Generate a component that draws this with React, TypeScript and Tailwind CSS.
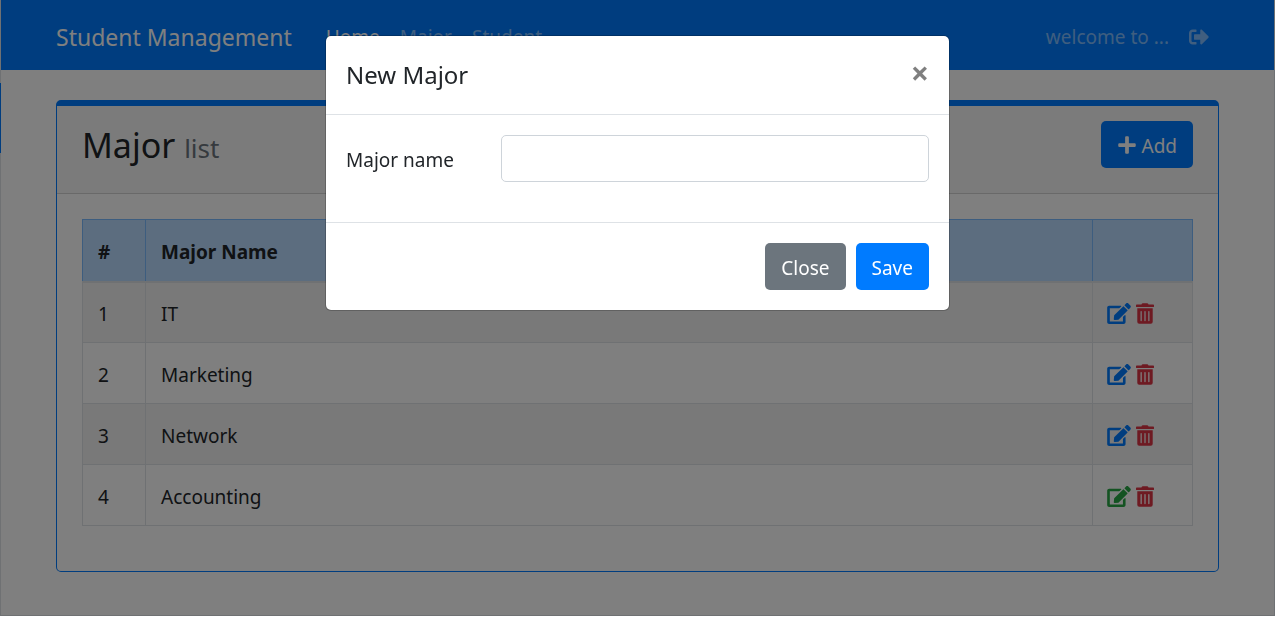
import { FaEdit, FaPlus, FaSignOutAlt, FaTrashAlt } from "react-icons/fa";

type Major = { id: number; name: string; active?: boolean };

const majors: Major[] = [
  { id: 1, name: "IT" },
  { id: 2, name: "Marketing" },
  { id: 3, name: "Network" },
  { id: 4, name: "Accounting", active: true },
];

function Navbar() {
  return (
    <nav className="flex h-[70px] items-center bg-[#007bff] px-[55px] pt-1 text-[19px]">
      <a href="#" className="mr-[34px] text-[23px] text-white">Student Management</a>
      <div className="flex flex-1 gap-5">
        <a href="#" className="text-white">Home</a>
        <a href="#" className="text-white/50">Major</a>
        <a href="#" className="text-white/50">Student</a>
      </div>
      <div className="flex items-center gap-5 pr-2.5 text-white/50">
        <span>welcome to ...</span>
        <a href="#" aria-label="Sign out"><FaSignOutAlt className="size-5" /></a>
      </div>
    </nav>
  );
}

function MajorTable() {
  return (
    <table className="w-full border-collapse text-left text-[19px]">
      <thead>
        <tr className="h-[62px] bg-[#b8daff]">
          <th className="w-[63px] border border-b-2 border-[#7abaff] border-b-[#dee2e6] px-[15px] pt-1">#</th>
          <th className="border border-b-2 border-[#7abaff] border-b-[#dee2e6] px-[15px] pt-1">Major Name</th>
          <th className="w-[100px] border border-b-2 border-[#7abaff] border-b-[#dee2e6]" />
        </tr>
      </thead>
      <tbody>
        {majors.map((major) => (
          <tr key={major.id} className="h-[61px] odd:bg-[#f2f2f2]">
            <td className="border border-[#dee2e6] px-[15px] pt-1">{major.id}</td>
            <td className="border border-[#dee2e6] px-[15px] pt-1">{major.name}</td>
            <td className="border border-[#dee2e6] px-3.5 pt-0.5">
              <div className="flex items-center gap-[5px]">
                <button type="button" aria-label={`Edit ${major.name}`} className={major.active ? "text-[#28a745]" : "text-[#007bff]"}>
                  <FaEdit className="h-[21px] w-6" />
                </button>
                <button type="button" aria-label={`Delete ${major.name}`} className="text-[#dc3545]">
                  <FaTrashAlt className="h-[21px] w-[18px]" />
                </button>
              </div>
            </td>
          </tr>
        ))}
      </tbody>
    </table>
  );
}

function MajorDialog() {
  return (
    <div className="fixed inset-x-0 top-0 bottom-px flex items-start justify-center bg-black/50 pt-[35px]">
      <form role="dialog" aria-modal="true" aria-labelledby="dialog-title" className="w-full max-w-[625px] rounded-md border border-black/20 bg-white bg-clip-padding">
        <div className="flex items-start justify-between border-b border-[#dee2e6] p-5">
          <h2 id="dialog-title" className="text-2xl leading-[38px]">New Major</h2>
          <button type="button" aria-label="Close dialog" className="text-[32px] leading-[34px] font-bold text-black/50">×</button>
        </div>
        <div className="flex items-center px-5 pt-5 pb-10">
          <label htmlFor="major-name" className="w-[155px] pt-1 text-[19px]">Major name</label>
          <input id="major-name" type="text" className="h-[47px] min-w-0 flex-1 rounded-[5px] border border-[#ced4da] px-4 text-[19px]" />
        </div>
        <div className="flex justify-end gap-2.5 border-t border-[#dee2e6] p-5 text-[19px] text-white">
          <button type="button" className="h-[47px] rounded-[5px] bg-[#6c757d] px-4 pt-1">Close</button>
          <button type="submit" className="h-[47px] rounded-[5px] bg-[#007bff] px-4 pt-1">Save</button>
        </div>
      </form>
    </div>
  );
}

export default function App() {
  return (
    <div className="relative min-h-[calc(100vh-1px)] border border-t-0 border-[#dee2e6] bg-white font-['Noto_Sans',sans-serif] text-[#212529]">
      <span aria-hidden="true" className="absolute top-[83px] -left-px h-[70px] w-px bg-[#007bff]" />
      <Navbar />
      <main className="px-[55px] pt-[30px]">
        <section className="rounded-[5px] border border-t-[6px] border-[#007bff]">
          <header className="flex h-[88px] items-start justify-between border-b border-black/15 bg-black/3 px-[25px] pt-[15px]">
            <h1 className="text-[34px] leading-[48px]">
              Major <small className="text-[26px] text-[#6c757d]">list</small>
            </h1>
            <button type="button" className="flex h-[47px] items-center gap-1 rounded-[5px] bg-[#007bff] px-4 text-[19px] text-white">
              <FaPlus className="size-5" />
              <span className="pt-1">Add</span>
            </button>
          </header>
          <div className="px-[25px] pt-[25px] pb-[45px]">
            <MajorTable />
          </div>
        </section>
      </main>
      <MajorDialog />
    </div>
  );
}
